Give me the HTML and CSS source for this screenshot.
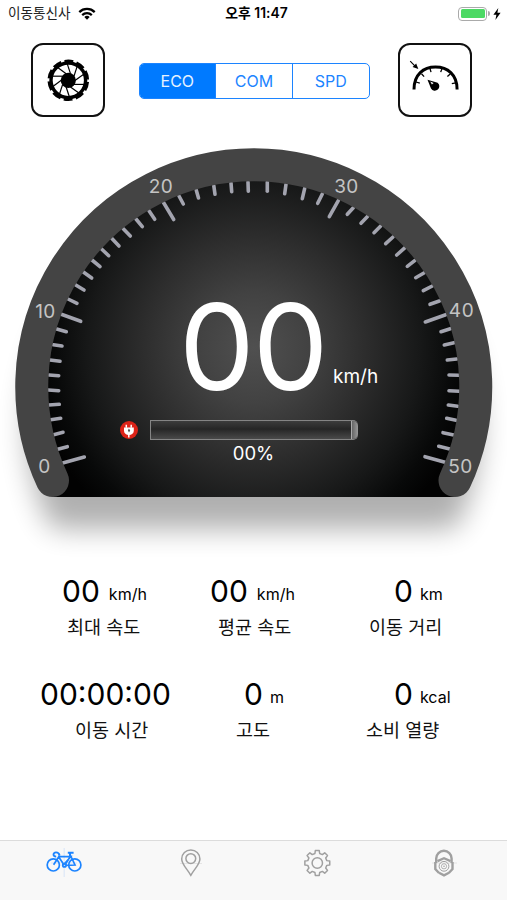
FILE: index.html
```
<!DOCTYPE html>
<html lang="ko">
<head>
    <meta charset="UTF-8">
    <meta name="viewport" content="width=device-width, initial-scale=1.0">
    <title>속도계</title>
    <link rel="stylesheet" href="styles.css">
</head>
<body>

<div class="status">
    <div class="carrier">
        <span>이동통신사</span>
        <svg class="wifi" viewBox="0 0 18 13" width="18" height="13">
            <path d="M1.3 5.1a11 11 0 0 1 15.4 0" fill="none" stroke="#000" stroke-width="2.3"/>
            <path d="M4.2 8.1a6.9 6.9 0 0 1 9.6 0" fill="none" stroke="#000" stroke-width="2.2"/>
            <path d="M6.3 10.1a3.9 3.9 0 0 1 5.4 0L9 12.8z"/>
        </svg>
    </div>
    <div class="clock">오후 11:47</div>
    <div class="power">
        <div class="battery"><div class="level"></div></div>
        <div class="nub"></div>
        <svg viewBox="0 0 8 12" width="8" height="12"><path d="M5.3 0L.4 6.8h3L2.4 12l5.2-7.2H4.4z"/></svg>
    </div>
</div>

<div class="toolbar">
    <button class="toolBtn">
        <svg viewBox="0 0 44 44" width="44" height="44">
            <circle cx="22.3" cy="22.3" r="17.3" fill="none" stroke="#000" stroke-width="3.4"/>
            <circle cx="22.3" cy="22.3" r="18.8" fill="none" stroke="#000" stroke-width="4" stroke-dasharray="8.6 3.213" stroke-dashoffset="-1.6"/>
            <circle cx="22.3" cy="22.3" r="7.6"/>
            <g id="spokes" stroke="#000" stroke-width="1.2"></g>
        </svg>
    </button>
    <div class="segment">
        <div class="seg active">ECO</div>
        <div class="seg">COM</div>
        <div class="seg">SPD</div>
    </div>
    <button class="toolBtn">
        <svg viewBox="0 0 54 40" width="54" height="40">
            <g fill="none" stroke="#000">
                <path d="M6 29.400C6 14.400 15.500 7 27.500 7s21.600 7.400 21.600 22.400" stroke-width="3"/>
                <path d="M8 22l3.800 1.200M13.500 13.800l2.600 2.800M22 8.500l1 3.600M34 8.500l-1.300 3.600M42.200 14l-2.800 2.600M47.800 22.800l-4 .8" stroke-width="1.300"/>
                <path d="M2.200 1.200l4.600 4.600" stroke-width="1.100"/>
            </g>
            <path d="M10.300 9.100L4.600 7.100l3.600-3.500z"/>
            <path d="M19.500 19.700l10.100 3a4.500 4.500 0 1 1-6.600 5.900z"/>
            <path d="M22.200 21.600l3.400 1.300-1.700 1.700z" fill="#fff"/>
        </svg>
    </button>
</div>

<div class="gauge">
    <svg class="dial" viewBox="0 130 507 430" width="507" height="430">
        <defs>
            <radialGradient id="face" gradientUnits="userSpaceOnUse" cx="254" cy="348" r="222">
                <stop offset="0" stop-color="#505050"/>
                <stop offset=".25" stop-color="#424242"/>
                <stop offset=".5" stop-color="#2d2d2d"/>
                <stop offset=".75" stop-color="#171818"/>
                <stop offset=".9" stop-color="#080909"/>
                <stop offset="1" stop-color="#020202"/>
            </radialGradient>
            <filter id="soft" x="-20%" y="-20%" width="140%" height="140%">
                <feGaussianBlur stdDeviation="14"/>
            </filter>
        </defs>
        <path d="M62 497A16.5 16.5 0 0 1 47 487.500A227 227 0 1 1 460.500 487.500A16.500 16.500 0 0 1 445.500 497z" transform="translate(0 32)" opacity=".31" filter="url(#soft)"/>
        <path d="M52.500 497V480.500A221.700 221.700 0 1 1 455 480.500V497z" fill="url(#face)"/>
        <g id="ticks" stroke="#a3a4af" stroke-width="3.6" stroke-linecap="round"></g>
        <path d="M52.500 480.500A222 222 0 1 1 455 480.500" fill="none" stroke="#444" stroke-width="33" stroke-linecap="round"/>
        <g class="marks">
            <text x="44.500" y="472.500">0</text>
            <text x="45.500" y="317.500">10</text>
            <text x="161" y="193">20</text>
            <text x="346.500" y="192.500">30</text>
            <text x="461.500" y="317">40</text>
            <text x="460.500" y="472.500">50</text>
        </g>
    </svg>
    <div class="readout">
        <div class="speed"><span class="num">00</span><span class="unit">km/h</span></div>
        <div class="charge">
            <svg viewBox="0 0 18 18" width="18" height="18">
                <circle cx="9" cy="9" r="9" fill="#dc2318"/>
                <path d="M6.300 3.700v3M11.200 3.700v3M8.800 12.500v4" stroke="#fff" stroke-width="1.500"/>
                <path d="M4 6.500h9.800v3.300c0 2.400-2 4.200-4.900 4.200S4 12.200 4 9.800z" fill="#fff"/>
                <path d="M8.900 7.600l1.300 1.800-1.200 2.200-1.100-2z" fill="#555"/>
            </svg>
            <div class="bar"><div class="cap"></div></div>
        </div>
        <div class="percent">00%</div>
    </div>
</div>

<div class="stats">
    <div class="stat maxSpeed">
        <div class="value">00<small>km/h</small></div>
        <div class="name">최대 속도</div>
    </div>
    <div class="stat avgSpeed">
        <div class="value">00<small>km/h</small></div>
        <div class="name">평균 속도</div>
    </div>
    <div class="stat distance">
        <div class="value">0<small>km</small></div>
        <div class="name">이동 거리</div>
    </div>
    <div class="stat time">
        <div class="value">00:00:00</div>
        <div class="name">이동 시간</div>
    </div>
    <div class="stat altitude">
        <div class="value">0<small>m</small></div>
        <div class="name">고도</div>
    </div>
    <div class="stat calorie">
        <div class="value">0<small>kcal</small></div>
        <div class="name">소비 열량</div>
    </div>
</div>

<div class="tabs">
    <div class="tab active">
        <svg viewBox="0 0 40 30" width="40" height="30">
            <path d="M21.200 0v29M8 15h26" stroke="#cfe0f7" stroke-width=".8"/>
            <g fill="none" stroke="currentColor" stroke-width="1.700">
                <circle cx="10.300" cy="16.900" r="6.100"/>
                <circle cx="31.800" cy="16.900" r="6.100"/>
                <circle cx="21.400" cy="17.200" r="1.700"/>
                <path d="M10.600 16.800L16.600 7.500M15.400 8.600L20.800 16.600L27.800 8.600H16M27 6.500L32 17L22.500 17.400M27 9L22.200 16.500"/>
                <path d="M13.200 8.400c-3.400.5-3.600-4-.2-4 2 0 3 .7 3.600 3M24.800 4.800h5.800M27 5v3" stroke-width="1.900"/>
            </g>
        </svg>
    </div>
    <div class="tab">
        <svg viewBox="0 0 40 30" width="40" height="30">
            <path d="M10 15.500h22" stroke="#e0e0e0" stroke-width=".8"/>
            <g fill="none" stroke="currentColor" stroke-width="1.500">
                <path d="M20.800 27.300C17 20.500 11.700 16.500 11.700 11a9.100 9.100 0 0 1 18.200 0C29.900 16.500 24.600 20.500 20.800 27.300z"/>
                <circle cx="20.800" cy="10.600" r="4.900"/>
            </g>
        </svg>
    </div>
    <div class="tab">
        <svg viewBox="0 0 40 30" width="40" height="30">
            <g fill="none" stroke="currentColor" stroke-width="1.500" stroke-linejoin="round">
                <path id="gear"/>
                <circle cx="20.300" cy="15" r="5.200"/>
            </g>
        </svg>
    </div>
    <div class="tab">
        <svg viewBox="0 0 40 30" width="40" height="30">
            <path d="M8 15h25" stroke="#ddd" stroke-width=".8"/>
            <g fill="none" stroke="currentColor">
                <path d="M12.200 15V10.500a7.700 7.700 0 0 1 15.400 0V15" stroke-width="2.400"/>
                <path d="M11.300 14v7l3.700 4M28.500 14v7l-3.700 4" stroke-width="2.400"/>
                <path d="M13.500 13.200l6.500-3 6.500 3M15 24.700l5 2.600 5-2.600" stroke-width="2.400"/>
                <circle cx="20" cy="18.300" r="4.900" stroke-width="1"/>
                <circle cx="20" cy="18.300" r="2.600" stroke-width=".8"/>
            </g>
            <circle cx="20" cy="18.300" r=".8" fill="currentColor"/>
        </svg>
    </div>
</div>

<script src="script.js"></script>
</body>
</html>
```
FILE: styles.css
```
* {margin:0;padding:0;box-sizing:border-box;}
html,body {width:100%;height:100%;}
body {
    display: flex;
    flex-direction: column;
    background: #fff;
    color: #000;
    font-family: Inter, "Noto Sans CJK KR", sans-serif;
    overflow: hidden;
}

/** 상태바 */
.status{
    display: grid;
    grid-template-columns: 1fr auto 1fr;
    align-items: center;
    flex: none;
    height: 27px;
    padding: 0 6px 0 8px;
    font-size: 13.6px;
    line-height: 27px;
}
.carrier{
    display: flex;
    align-items: center;
    gap: 7px;
    color: #222;
}
.clock{
    padding-left: 4px;
    font-size: 13.9px;
    font-weight: 600;
}
.power{
    display: flex;
    align-items: center;
    justify-content: flex-end;
}
.battery{
    width: 29px;
    height: 14px;
    padding: 1.5px;
    border: 1px solid #aaa;
    border-radius: 4px;
}
.level{
    height: 100%;
    border-radius: 1.5px;
    background: #4cd964;
}
.nub{
    width: 2px;
    height: 5px;
    margin: 0 3px 0 1px;
    border-radius: 0 2px 2px 0;
    background: #aaa;
}

/** 상단 버튼 */
.toolbar{
    display: flex;
    align-items: center;
    justify-content: space-between;
    flex: none;
    height: 74px;
    margin-top: 16px;
    padding: 0 35px 0 31px;
}
.toolBtn{
    display: flex;
    align-items: center;
    justify-content: center;
    width: 74px;
    height: 74px;
    border: 2px solid #111;
    border-radius: 12px;
    background: #fff;
}
.segment{
    display: flex;
    width: 231px;
    height: 36px;
    margin: 2px 0 0 5px;
    border: 1px solid #1c84ff;
    border-radius: 5px;
    overflow: hidden;
}
.seg{
    flex: 1;
    border-left: 1px solid #1c84ff;
    color: #1c84ff;
    font-size: 16px;
    line-height: 34px;
    text-align: center;
}
.seg:first-child{border-left: 0;}
.seg.active{
    background: #007aff;
    color: #e6f2ff;
}

/** 계기판 */
.gauge{
    display: grid;
    flex: none;
    height: 430px;
    margin-top: 13px;
}
.dial,.readout{grid-area: 1 / 1;}
.marks{
    fill: #c4c4c4;
    font-size: 19px;
    letter-spacing: .5px;
    text-anchor: middle;
}
.readout{
    padding-top: 157px;
    color: #fff;
}
.speed{
    display: flex;
    align-items: flex-start;
    height: 132px;
    padding-left: 179px;
}
.speed .num{
    width: 154px;
    font-size: 120px;
    line-height: 120px;
    letter-spacing: -2px;
}
.speed .unit{
    padding-top: 75px;
    font-size: 19px;
    line-height: 30px;
}
.charge{
    display: flex;
    align-items: center;
    gap: 12px;
    height: 22px;
    padding-left: 120px;
}
.bar{
    display: flex;
    justify-content: flex-end;
    width: 208px;
    height: 20px;
    border: 1px solid #858585;
    border-right: 0;
    border-radius: 0 5px 5px 0;
    background: linear-gradient(#3c3c3c, #262626 45%, #4a4a4a);
}
.cap{
    width: 7px;
    border-left: 1px solid #aaa;
    border-radius: 0 5px 5px 0;
    background: linear-gradient(90deg, #666, #999);
}
.percent{
    font-size: 18.5px;
    line-height: 24px;
    text-align: center;
}

/** 주행 기록 */
.stats{
    display: grid;
    grid-template-columns: 169px 169px 169px;
    grid-template-rows: 103px 103px;
    flex: none;
    margin-top: 10px;
}
.value{
    display: flex;
    height: 43px;
    font-size: 30px;
    line-height: 42px;
    white-space: nowrap;
}
.value small{
    margin-left: 9px;
    padding-top: 2px;
    font-size: 16px;
    line-height: 44px;
}
.name{
    font-size: 18.5px;
    line-height: 28px;
    color: #111;
    white-space: nowrap;
}
.maxSpeed .value{padding-left: 62px;}
.maxSpeed .name{padding-left: 67px;}
.avgSpeed .value{padding-left: 41px;}
.avgSpeed .name{padding-left: 49px;}
.distance .value{padding-left: 56px;}
.distance .name{padding-left: 31px;}
.time .value{padding-left: 40px;}
.time .name{padding-left: 75px;}
.altitude .value{padding-left: 75px;}
.altitude .name{padding-left: 67px;}
.calorie .value{padding-left: 56px;}
.calorie .name{padding-left: 28px;}
.distance small,.altitude small,.calorie small{margin-left: 7px;}

/** 하단 탭 */
.tabs{
    display: flex;
    flex: none;
    height: 60px;
    margin-top: auto;
    border-top: 1px solid #dcdcdc;
    background: #f8f8f8;
}
.tab{
    display: flex;
    flex: 1;
    justify-content: center;
    padding-top: 7px;
    color: #a0a0a0;
}
.tab.active{color: #1c84ff;}
```
FILE: script.js
```
// 눈금 [바깥 x, 바깥 y, 안쪽 x, 안쪽 y]
var ticks = [
    [62.7,463,84.3,457], [57.7,449.3,67.3,446.7], [53.7,434.7,63,432.3], [50.7,419.7,60.7,418.3],
    [49,405,59.3,404.3], [48.3,390,58.7,390.7], [49,375,58.7,375.7], [50,360,60,361.3],
    [53.3,344.7,62,346], [56.7,329,66.3,331.7],
    [61.3,314.3,80.7,321.3], [68,299,77,303.3], [75.3,284.7,84,290], [83.3,272,91.7,278],
    [92,260,100,266.7], [101.3,248.7,108.7,255.7], [111.7,238.3,119,246], [123.3,228.7,130.3,236],
    [136,219,142.3,226.7], [149,210.7,154.7,219.3],
    [163.5,202.5,173.7,219.5], [179,196,183.3,204], [196.3,190.3,198.5,198], [213.8,185.7,215,194.3],
    [231,183,231.7,191.7], [248,182,248.3,191.3], [267.3,182,267.3,191.3], [286,184.3,284.7,193.7],
    [304.7,188.3,302.3,198.7], [322.3,194,317.7,203.3],
    [338.3,200.7,329.3,216.7], [353.3,207.7,347.3,214.3], [367.7,216.3,361,223.3], [380.7,226,374,232.7],
    [393,237,385.7,243.7], [405,247.7,396.7,255], [415,260.3,407.3,266.3], [424.3,272.7,415.7,277.7],
    [432.3,286,423.3,290.7], [439.3,301,430,304.3],
    [445.7,314.7,425.3,322], [450.3,328.7,441,331.7], [454,342.7,444.3,345], [456.7,359,447.3,360],
    [458.7,375.3,449,375], [459,391.3,449,390.7], [457.7,406.3,448.3,405], [456,420.3,446.7,418.3],
    [453.7,435,443,432.7], [449.7,449,438.7,446.3], [445,462.3,425,456.7]
];

var html = '';
ticks.forEach(function(t){
    html += `<path d="M${t[0]} ${t[1]}L${t[2]} ${t[3]}"/>`;
});
document.querySelector('#ticks').innerHTML = html;

function point(cx, cy, r, deg){
    var a = deg * Math.PI / 180;
    return (cx + r * Math.cos(a)).toFixed(2) + ' ' + (cy + r * Math.sin(a)).toFixed(2);
}

// 체인링 살
html = '';
for (var i = 0; i < 10; i++) {
    html += `<path d="M${point(22.3, 22.3, 7, i*36)}L${point(22.3, 22.3, 17, i*36-22)}"/>`;
}
document.querySelector('#spokes').innerHTML = html;

// 톱니 8개
var d = '';
for (var k = 0; k < 8; k++) {
    var c = k * 45 - 90;
    d += (k ? 'L' : 'M') + point(20.3, 15, 9.8, c-14);
    d += 'L' + point(20.3, 15, 12.6, c-9);
    d += 'L' + point(20.3, 15, 12.6, c+9);
    d += 'L' + point(20.3, 15, 9.8, c+14);
}
document.querySelector('#gear').setAttribute('d', d + 'z');
```
